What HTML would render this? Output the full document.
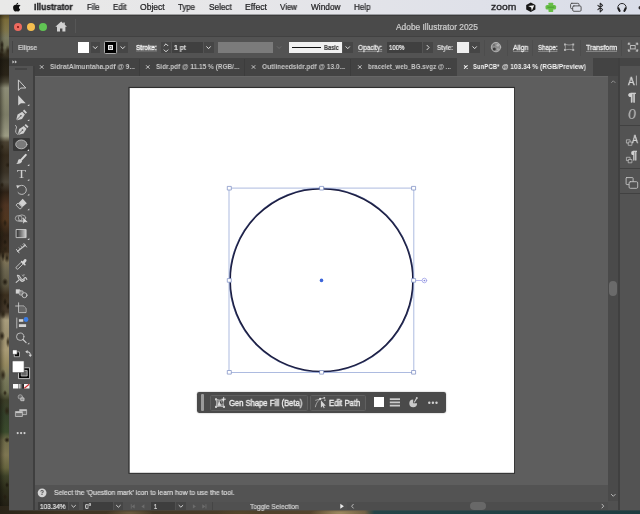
<!DOCTYPE html>
<html lang="en">
<head>
<meta charset="utf-8">
<title>Adobe Illustrator 2025</title>
<style>
*{margin:0;padding:0;box-sizing:border-box}
html,body{width:640px;height:514px;overflow:hidden;background:#3a3226}
body{position:relative;font-family:"Liberation Sans",sans-serif;font-size:8px;line-height:10px;color:#d8d8d8}
.a{position:absolute}
.t{position:absolute;white-space:pre;line-height:10px;transform-origin:0 0;will-change:transform;-webkit-text-stroke:0.22px currentColor}
.b{-webkit-text-stroke:0}
.sb{-webkit-text-stroke:0.38px currentColor}
.t.s3{-webkit-text-stroke:0.3px currentColor}
.u{background:linear-gradient(#a6a6a6,#a6a6a6) 0 7.8px/100% 0.6px no-repeat}
svg{position:absolute;left:0;top:0;overflow:visible}
.cb{position:absolute;top:41.9px;height:11.2px;background:#464646}
.in{position:absolute;top:41.9px;height:11.2px;background:#404040}
#wall{left:0;top:0;width:640px;height:514px;background:
 radial-gradient(ellipse 2px 3px at 2px 185px,#241c10 0,#241c1000 100%),
 radial-gradient(ellipse 3px 3px at 7px 440px,#1c160c 0,#1c160c00 100%),
 radial-gradient(ellipse 2px 3px at 7px 485px,#1c160c 0,#1c160c00 100%),
 radial-gradient(ellipse 2px 3px at 5px 242px,#1c160c 0,#1c160c00 100%),
 radial-gradient(ellipse 2px 4px at 5px 302px,#1c160c 0,#1c160c00 100%),
 radial-gradient(ellipse 2px 6px at 8px 342px,#2a2214 0,#2a221400 100%),
 radial-gradient(ellipse 2px 5px at 2px 45px,#1c160c 0,#1c160c00 100%),
 radial-gradient(ellipse 2px 5px at 2px 234px,#2a2214 0,#2a221400 100%),
 radial-gradient(ellipse 2px 4px at 8px 306px,#1c160c 0,#1c160c00 100%),
 radial-gradient(ellipse 2px 3px at 1px 210px,#2a2214 0,#2a221400 100%),
 radial-gradient(ellipse 3px 5px at 2px 336px,#241c10 0,#241c1000 100%),
 radial-gradient(ellipse 3px 5px at 7px 258px,#241c10 0,#241c1000 100%),
 radial-gradient(ellipse 2px 3px at 2px 147px,#2a2214 0,#2a221400 100%),
 radial-gradient(ellipse 3px 5px at 3px 314px,#2a2214 0,#2a221400 100%),
 radial-gradient(ellipse 2px 3px at 5px 393px,#241c10 0,#241c1000 100%),
 radial-gradient(ellipse 3px 4px at 5px 282px,#1c160c 0,#1c160c00 100%),
 radial-gradient(ellipse 2px 3px at 5px 497px,#241c10 0,#241c1000 100%),
 radial-gradient(ellipse 3px 5px at 7px 411px,#2a2214 0,#2a221400 100%),
 radial-gradient(ellipse 3px 6px at 3px 375px,#2a2214 0,#2a221400 100%),
 radial-gradient(ellipse 3px 3px at 1px 55px,#241c10 0,#241c1000 100%),
 radial-gradient(ellipse 3px 6px at 8px 51px,#2a2214 0,#2a221400 100%),
 radial-gradient(ellipse 3px 3px at 8px 165px,#241c10 0,#241c1000 100%),
 radial-gradient(ellipse 2px 6px at 3px 256px,#1c160c 0,#1c160c00 100%),
 radial-gradient(ellipse 2px 4px at 2px 50px,#241c10 0,#241c1000 100%),
 radial-gradient(ellipse 2px 4px at 5px 223px,#241c10 0,#241c1000 100%),
 radial-gradient(ellipse 3px 4px at 5px 249px,#2a2214 0,#2a221400 100%),
 linear-gradient(90deg,rgba(10,8,4,.42) 0,rgba(10,8,4,.12) 3px,rgba(0,0,0,0) 5px,rgba(0,0,0,0) 10px,transparent 10px) 0 0/10px 506px no-repeat,
 linear-gradient(180deg,#4a3e20 14px,#7a6c3a 20px,#7e7448 30px,#7a7a60 38px,#6c6c54 48px,#3a3424 54px,#221e14 60px,#2a2418 75px,#4a4636 82px,#8c8c76 88px,#86866e 100px,#7c7c66 115px,#8e8e78 128px,#9c9c84 136px,#4a4232 142px,#342a1c 155px,#3a3226 172px,#4c463a 182px,#2e2216 192px,#4e3422 205px,#50361f 220px,#2e2216 235px,#3a2c1c 252px,#85785a 258px,#6c6650 270px,#5a5440 285px,#3a2e1e 295px,#44382a 312px,#a89c7c 320px,#9c9070 334px,#a89a74 350px,#94885e 365px,#7a7a5c 378px,#6c6e50 392px,#3a3c26 400px,#34402a 414px,#3a4a2c 432px,#6e6a48 440px,#7e7652 455px,#66643e 468px,#3e4228 476px,#2c2c1a 490px,#221f14 506px,transparent 506px) 0 0/10px 514px no-repeat,
 radial-gradient(ellipse 30px 5px at 340px 513px,#a08c62 0,#a08c6200 100%),
 radial-gradient(ellipse 24px 4px at 130px 513px,#6c5c40 0,#6c5c4000 100%),
 radial-gradient(ellipse 24px 4px at 240px 513px,#54462c 0,#54462c00 100%),
 linear-gradient(90deg,#2a2418 0,#3f3524 10%,#463a28 30%,#55452e 50%,#6a5a40 57%,#254548 58.5%,#1e3c40 100%)}
</style>
</head>
<body>
<div id="wall" class="a"></div>

<!-- ===== macOS menu bar ===== -->


<!-- ===== window chrome ===== -->
<div class="a" style="left:9.4px;top:14px;width:630.6px;height:496.4px;background:#535353"></div>
<!-- title bar -->
<div class="a" style="left:9.4px;top:14px;width:630.6px;height:23px;background:#4a4a4a;border-top:2px solid #3b3b3b;border-bottom:1px solid #414141"></div>
<div class="a" style="left:0;top:0;width:640px;height:14px;background:linear-gradient(90deg,#e9e9e8 0,#e6e6e9 40%,#dfe1e9 75%,#d9dde8 100%)"></div>
<div class="a" style="left:0;top:14px;width:640px;height:1px;background:linear-gradient(90deg,#a09f9c 0,#9c9da1 50%,#94989f 100%)"></div>
<div class="a" style="left:14px;top:22.8px;width:8.2px;height:8.2px;border-radius:50%;background:#ed6a5f"></div>
<div class="a" style="left:16.8px;top:25.6px;width:2.6px;height:2.6px;border-radius:50%;background:#7a120c"></div>
<div class="a" style="left:26.5px;top:22.8px;width:8.2px;height:8.2px;border-radius:50%;background:#f5be4f"></div>
<div class="a" style="left:38.8px;top:22.8px;width:8.2px;height:8.2px;border-radius:50%;background:#61c554"></div>
<div class="a" style="left:74.6px;top:19px;width:1px;height:14px;background:#565656"></div>

<!-- control bar -->
<div class="a" style="left:9.4px;top:37px;width:630.6px;height:20.5px;background:#535353"></div>
<div class="a" style="left:12.2px;top:41px;width:1px;height:11.5px;background:#454545"></div>
<div class="a" style="left:77.5px;top:41.9px;width:11.9px;height:11.2px;background:#fff"></div>
<div class="cb" style="left:90.6px;width:9.2px"></div>
<div class="a" style="left:104.4px;top:41.3px;width:12.5px;height:12.4px;background:#000;border:1px solid #ababab;border-radius:1.4px"></div>
<div class="a" style="left:108.2px;top:45.1px;width:4.8px;height:4.8px;background:#777;border:1px solid #ececec"></div>
<div class="a" style="left:109.9px;top:46.8px;width:1.4px;height:1.4px;background:#e0e0e0"></div>
<div class="cb" style="left:118px;width:9.5px"></div>
<div class="a" style="left:135.6px;top:45.2px;width:21.6px;height:6.4px;background:#686868"></div>
<div class="cb" style="left:161.2px;width:9.4px"></div>
<div class="in" style="left:172px;width:30.5px"></div>
<div class="cb" style="left:203.7px;width:10px"></div>
<div class="a" style="left:217.5px;top:41.9px;width:55.5px;height:11.6px;background:#7b7b7b"></div>
<div class="a" style="left:288.7px;top:42px;width:53.2px;height:11px;background:#f0f0f0"></div>
<div class="a" style="left:292px;top:46.9px;width:29px;height:1.2px;background:#111"></div>
<div class="cb" style="left:343px;width:9.8px"></div>
<div class="in" style="left:387px;width:34.9px"></div>
<div class="cb" style="left:422.6px;width:10.9px"></div>
<div class="a" style="left:457px;top:41.9px;width:12px;height:11.2px;background:#efefef"></div>
<div class="cb" style="left:470px;width:9.6px"></div>
<div class="a" style="left:483.6px;top:39.5px;width:1px;height:16px;background:#4d4d4d"></div>
<div class="a" style="left:506.6px;top:39.5px;width:1px;height:16px;background:#4d4d4d"></div>
<div class="a" style="left:532.4px;top:39.5px;width:1px;height:16px;background:#4d4d4d"></div>
<div class="a" style="left:580.4px;top:39.5px;width:1px;height:16px;background:#4d4d4d"></div>
<div class="a" style="left:621.2px;top:39.5px;width:1px;height:16px;background:#4c4c4c"></div>

<!-- tab bar -->
<div class="a" style="left:9.4px;top:57.5px;width:630.6px;height:18.5px;background:#434343"></div>
<div class="a" style="left:139.3px;top:58.5px;width:1px;height:17.5px;background:#3c3c3c"></div>
<div class="a" style="left:243.5px;top:58.5px;width:1px;height:17.5px;background:#3c3c3c"></div>
<div class="a" style="left:349.8px;top:58.5px;width:1px;height:17.5px;background:#3c3c3c"></div>
<div class="a" style="left:456.6px;top:58.4px;width:136.6px;height:17.6px;background:#535353"></div>

<!-- left tool panel -->
<div class="a" style="left:9.4px;top:57.5px;width:25.3px;height:8.1px;background:#434343"></div>
<div class="a" style="left:9.4px;top:65.6px;width:23.9px;height:444.8px;background:#535353"></div>
<div class="a" style="left:33.3px;top:65.6px;width:1.4px;height:444.8px;background:#3f3f3f"></div>
<div class="a" style="left:15px;top:68.3px;width:12.2px;height:1.6px;background:#454545"></div>
<div class="a" style="left:13px;top:138.2px;width:16.9px;height:12.5px;background:#383838;border-radius:1px"></div>

<!-- canvas -->
<div class="a" style="left:34.7px;top:76px;width:573.5px;height:408.5px;background:#5e5e5e;border-top:1px solid #666"></div>
<!-- artboard -->
<svg width="640" height="514" viewBox="0 0 640 514"><rect x="128.4" y="86.9" width="386.6" height="386.9" fill="#2e2e2e"/><rect x="129.65" y="88.05" width="384.4" height="384.75" fill="#fff"/></svg>

<!-- vertical scrollbar -->
<div class="a" style="left:608.2px;top:76px;width:10.2px;height:425.5px;background:#4a4a4a"></div>
<div class="a" style="left:609.1px;top:280.8px;width:8.3px;height:15px;border-radius:4.2px;background:#6a6a6a"></div>
<div class="a" style="left:608.2px;top:501px;width:10.2px;height:9.4px;background:#505050"></div>
<div class="a" style="left:617.8px;top:57.5px;width:2.4px;height:452.9px;background:#404040"></div>
<!-- right dock -->
<div class="a" style="left:620.2px;top:58.2px;width:19.8px;height:7.4px;background:#454545"></div>
<div class="a" style="left:620.2px;top:65.6px;width:19.8px;height:444.8px;background:#535353"></div>
<div class="a" style="left:620.2px;top:124.7px;width:19.8px;height:1px;background:#414141"></div>
<div class="a" style="left:620.2px;top:168.1px;width:19.8px;height:1px;background:#414141"></div>
<div class="a" style="left:620.2px;top:192.8px;width:19.8px;height:1px;background:#414141"></div>

<!-- hint bar + status bar -->
<div class="a" style="left:34.7px;top:484.5px;width:573.5px;height:17px;background:#535353"></div>
<div class="a" style="left:34.7px;top:501.5px;width:573.5px;height:8.9px;background:#505050"></div>
<div class="a" style="left:347px;top:501.5px;width:261.2px;height:8.9px;background:#4d4d4d"></div>
<div class="a" style="left:470px;top:502px;width:16px;height:8px;border-radius:4px;background:#686868"></div>
<div class="a" style="left:38px;top:502px;width:30px;height:8.4px;background:#3e3e3e"></div>
<div class="a" style="left:68.7px;top:502px;width:10px;height:8.4px;background:#464646"></div>
<div class="a" style="left:82.5px;top:502px;width:30px;height:8.4px;background:#3e3e3e"></div>
<div class="a" style="left:113.7px;top:502px;width:9.5px;height:8.4px;background:#464646"></div>
<div class="a" style="left:150.5px;top:502px;width:24.5px;height:8.4px;background:#3e3e3e"></div>
<div class="a" style="left:176px;top:502px;width:9.7px;height:8.4px;background:#464646"></div>
<div class="a" style="left:211.7px;top:502px;width:1px;height:8.4px;background:#454545"></div>

<!-- floating contextual task bar -->
<div class="a" style="left:197.2px;top:391.5px;width:248.5px;height:21.8px;background:#4a4a4a;border-radius:2.4px;box-shadow:0 0 1.5px rgba(0,0,0,.45)"></div>
<div class="a" style="left:201.2px;top:394px;width:2.5px;height:16.6px;background:#999;border-radius:1px"></div>
<div class="a" style="left:210px;top:394.6px;width:97.5px;height:16.3px;background:#4f4f4f;border:1px solid #606060;border-radius:1.5px"></div>
<div class="a" style="left:309.7px;top:394.6px;width:56.8px;height:16.3px;background:#4f4f4f;border:1px solid #606060;border-radius:1.5px"></div>
<div class="a" style="left:373.7px;top:397.4px;width:10px;height:10px;background:#fff"></div>

<!-- soft bottom edge of the window (sub-pixel) -->
<div class="a" style="left:9px;top:510px;width:631px;height:1px;background:rgba(80,80,80,.42)"></div>

<!-- ===== icons (single overlay, page coordinates) ===== -->
<svg width="640" height="514" viewBox="0 0 640 514" fill="none" stroke-linecap="round" stroke-linejoin="round">
<!-- menu bar: apple, cube, printer, windows, bluetooth, headphones -->
<g transform="translate(13.1 2.7) scale(0.0452 0.0448)"><path fill="#111" d="M150 72c-1 1-21 12-21 37 0 29 26 39 26 40 0 1-4 14-13 27-8 12-17 23-30 23s-16-8-31-8c-15 0-20 8-32 8s-20-11-30-24C8 158 0 131 0 106c0-41 27-62 53-62 14 0 25 9 34 9 8 0 21-10 37-10 6 0 28 1 42 21zM101 34c7-8 11-19 11-30 0-2 0-3-1-4-11 0-24 7-31 16-6 7-12 18-12 29 0 2 0 3 1 4 1 0 2 0 3 0 10 0 22-6 29-15z"/></g>
<path fill="#161616" d="M530.8 2.5 L535.4 4.9 V9.5 L530.8 11.9 L526.2 9.5 V4.9z"/>
<path fill="#f4f4f4" d="M528.1 5.9 L534.3 5.3 L531.8 10.7 L531.2 7.6z"/>
<g fill="#66bd46"><rect x="548.5" y="2.7" width="4.7" height="3.2" rx=".6"/><rect x="545.5" y="5" width="10.6" height="4.6" rx="1.6"/><rect x="548.5" y="8.8" width="4.7" height="3.1" rx=".6"/></g>
<rect x="547.4" y="6.6" width="6.8" height="1.3" fill="#4fa636"/>
<rect x="570.6" y="3.3" width="8.4" height="5.4" rx="1.2" stroke="#48484a" stroke-width=".9"/>
<rect x="572.7" y="5.9" width="8.4" height="5.4" rx="1.2" fill="#dcdfe8" stroke="#48484a" stroke-width=".9"/>
<path d="M597.9 5.4 L602.6 9.6 L600.2 11.9 V3.2 L602.6 5.4 L597.9 9.6" stroke="#2a2a2c" stroke-width="1.05"/>
<path d="M619.3 11 A4.25 4.25 0 1 1 624.7 11" stroke="#2a2a2c" stroke-width="1"/>
<path d="M618.5 8.3 L619.7 11 M625.5 8.3 L624.3 11" stroke="#1e1e20" stroke-width="1.9"/>
<circle cx="640.2" cy="7.7" r="1.7" fill="#2a2a2c"/>

<!-- title bar: home -->
<path fill="#d2d2d2" d="M61.2 21.5 L55.4 26.7 H57 V31.5 H60 V28.4 H62.4 V31.5 H65.4 V26.7 H67 L64.8 24.7 V22.4 H63.3 V23.4z"/>

<!-- control bar chevrons -->
<g stroke="#dcdcdc" stroke-width="1">
<path d="M93.4 46.7 l1.85 2 l1.85 -2"/><path d="M120.9 46.7 l1.85 2 l1.85 -2"/><path d="M206.7 46.7 l1.85 2 l1.85 -2"/>
<path d="M345.9 46.7 l1.85 2 l1.85 -2"/><path d="M472.8 46.7 l1.85 2 l1.85 -2"/>
<path d="M164.1 45.7 l1.9 -1.9 l1.9 1.9"/><path d="M164.1 49.9 l1.9 1.9 l1.9 -1.9"/>
<path d="M427 45.3 l2.1 2.2 l-2.1 2.2"/>
</g>
<path d="M277.2 46.6 l1.9 1.9 l1.9 -1.9" stroke="#6c6c6c" stroke-width="1"/>
<!-- globe (recolor artwork) -->
<circle cx="496" cy="47.1" r="4.7" fill="#8c8c8c" stroke="#b9b9b9" stroke-width=".9"/>
<circle cx="494.3" cy="48.9" r="1.5" fill="#3c3c3c"/><circle cx="497.8" cy="45.2" r="1.3" fill="#b4b4b4"/><circle cx="497.9" cy="49.3" r="1.1" fill="#a8a8a8"/><circle cx="494" cy="45" r="1" fill="#6a6a6a"/>
<!-- shape widget icon -->
<path d="M565 44.5 Q569.1 45.6 573.2 44.5 Q572.3 47.2 573.2 49.9 Q569.1 48.8 565 49.9 Q565.9 47.2 565 44.5z" stroke="#a8a8a8" stroke-width=".8"/>
<g fill="#b6b6b6"><rect x="564" y="43.5" width="1.9" height="1.9"/><rect x="572.3" y="43.5" width="1.9" height="1.9"/><rect x="564" y="49" width="1.9" height="1.9"/><rect x="572.3" y="49" width="1.9" height="1.9"/></g>
<!-- isolate/transform-each icon -->
<rect x="630.8" y="45.5" width="4.4" height="3.4" stroke="#c9c9c9" stroke-width=".9"/>
<g stroke="#c9c9c9" stroke-width=".9"><path d="M628.5 43.3 l1.7 1.5 M637.5 43.3 l-1.7 1.5 M628.5 51 l1.7 -1.5 M637.5 51 l-1.7 -1.5"/><path d="M628.3 44.7 v-1.5 h1.6 M637.7 44.7 v-1.5 h-1.6 M628.3 49.6 v1.5 h1.6 M637.7 49.6 v1.5 h-1.6"/></g>

<!-- tab close x -->
<g stroke="#c6c6c6" stroke-width="1"><path d="M40.25 65.55 l2.90 2.90 m0 -2.90 l-2.90 2.90"/><path d="M146.35 65.55 l2.90 2.90 m0 -2.90 l-2.90 2.90"/><path d="M252.05 65.55 l2.90 2.90 m0 -2.90 l-2.90 2.90"/><path d="M358.35 65.55 l2.90 2.90 m0 -2.90 l-2.90 2.90"/></g>
<g stroke="#f2f2f2" stroke-width="1.05"><path d="M464.35 65.55 l2.90 2.90 m0 -2.90 l-2.90 2.90"/></g>
<!-- panel collapse >> -->
<path d="M12.4 60.3 l2.1 1.6 l-2.1 1.6z M14.9 60.3 l2.1 1.6 l-2.1 1.6z" fill="#c4c4c4"/>

<!-- ===== left tools ===== -->
<g id="tools">
<path d="M18.4 80.3 V90.3 L20.9 88 H25.4z" stroke="#cdcdcd" stroke-width="1"/>
<path d="M18.2 95.3 V105.6 L20.9 103.2 H25.7z" fill="#d2d2d2"/>
<!-- pen -->
<path fill="#d0d0d0" d="M16.3 119.5 L17.6 114.6 L22.2 111.7 L24.9 114.4 L22 119 L17.1 120.3z"/>
<path fill="#d0d0d0" d="M22.9 110.9 L24.2 109.6 L27 112.4 L25.7 113.7z"/>
<path d="M16.7 119.9 L20.6 116" stroke="#535353" stroke-width=".8"/><circle cx="20.9" cy="115.7" r=".8" fill="#535353"/>
<!-- curvature pen -->
<path fill="#d0d0d0" d="M17.9 133.9 L19.2 129 L23.8 126.1 L26.5 128.8 L23.6 133.4 L18.7 134.7z"/>
<path fill="#d0d0d0" d="M24.5 125.3 L25.8 124 L28.6 126.8 L27.3 128.1z"/>
<path d="M18.3 134.3 L22.2 130.4" stroke="#535353" stroke-width=".8"/><circle cx="22.5" cy="130.1" r=".8" fill="#535353"/>
<path d="M15.6 125.3 Q17.6 126.8 15.9 129.6 Q14.4 132.6 17.6 134.4" stroke="#c4c4c4" stroke-width=".9"/>
<!-- ellipse (active) -->
<ellipse cx="21.3" cy="144.4" rx="5.6" ry="4.4" fill="#7a7a7a" stroke="#bcbcbc" stroke-width=".9"/>
<!-- brush -->
<path d="M25.8 154.9 L21.2 159.9" stroke="#d6d6d6" stroke-width="2.1"/>
<path fill="#d2d2d2" d="M20 158.9 L22.1 161 Q21.6 164 16.2 164 Q17.8 162.8 17.9 161 Q18.2 159 20 158.9z"/>
<!-- rotate -->
<path d="M18.2 186.9 A4.6 4.6 0 1 1 18 192.6" stroke="#bdbdbd" stroke-width="1"/>
<path fill="#d0d0d0" d="M16.3 185.3 L20 185.5 L17.3 188.6z"/>
<!-- eraser -->
<path fill="#d2d2d2" d="M22.7 198.8 L26.8 203.2 L22.5 206.9 L18.6 202.9z"/>
<path d="M18.3 203.3 L22.2 207.3 L19.9 209.1 L16.2 205.3z" fill="#585858" stroke="#cfcfcf" stroke-width=".8"/>
<!-- shape builder -->
<ellipse cx="18.8" cy="218.4" rx="3.5" ry="2.9" stroke="#bdbdbd" stroke-width=".8"/><ellipse cx="22" cy="217.9" rx="3.7" ry="3" stroke="#bdbdbd" stroke-width=".8"/>
<path d="M18.5 220.6 Q20.5 222.4 23 221.6" stroke="#bdbdbd" stroke-width=".8"/>
<path fill="#d6d6d6" d="M22.9 216.9 V224 L24.6 222.3 H27.9z" stroke="#535353" stroke-width=".4"/>
<!-- mesh/measure -->
<path d="M17.6 251.3 L25.2 245.2" stroke="#c9c9c9" stroke-width="1.3"/>
<path d="M16.4 249.4 L19.1 252.9 M23.9 243.5 L26.6 247" stroke="#c9c9c9" stroke-width="1"/>
<path d="M18.9 247.6 l.9 1.1 M21 246 l.9 1.1 M22.9 244.5 l.6 .8" stroke="#c6c6c6" stroke-width=".7"/>
<!-- eyedropper -->
<rect x="-1.3" y="-4.4" width="2.6" height="8.8" rx="1.2" transform="translate(19.6 265.6) rotate(45)" stroke="#cdcdcd" stroke-width=".85"/>
<path d="M21.6 261.5 L24.9 264.8" stroke="#d6d6d6" stroke-width="1.5"/>
<path d="M23.5 262.8 L25.2 260.4" stroke="#d6d6d6" stroke-width="2.7"/>
<!-- puppet warp -->
<path d="M16.2 282.4 L19.4 279.6 Q18.2 277.4 17.4 275.3 Q19.5 274.8 20.3 277.6 Q22.2 281 24.2 278.3 Q25.6 276.4 26.8 279.4" stroke="#cdcdcd" stroke-width="1.1"/>
<path d="M20.4 279.8 Q22 282.4 24.4 280" stroke="#cdcdcd" stroke-width="1.5"/>
<path d="M22.3 275 l.9 1.3 m.8 -1.9 l-.2 1.3" stroke="#bdbdbd" stroke-width=".7"/>
<!-- blend -->
<rect x="15.8" y="289.3" width="4.1" height="4.3" fill="#d4d4d4"/>
<rect x="19.2" y="290.8" width="4" height="4.3" rx="1.2" fill="#7e7e7e" stroke="#c4c4c4" stroke-width=".7"/>
<circle cx="24.5" cy="295.2" r="2.5" fill="#535353" stroke="#cdcdcd" stroke-width=".9"/>
<!-- artboard -->
<path d="M18.6 302.8 V312.6 H26 V308.2 L23.8 306 H15.6" stroke="#c9c9c9" stroke-width=".9"/>
<path d="M23.6 306 V308.4 H26z" fill="#d6d6d6"/>
<rect x="19.2" y="306.6" width="6.3" height="5.5" fill="#666"/>
<!-- graph + blue dot -->
<path d="M16.8 318 V328" stroke="#c4c4c4" stroke-width=".9"/>
<rect x="18.9" y="319.2" width="4.4" height="2.6" fill="#d4d4d4"/><rect x="18.9" y="324.2" width="7.2" height="2.8" fill="#d4d4d4"/>
<circle cx="26" cy="319.5" r="2.4" fill="#3c7ee6"/>
<!-- zoom -->
<circle cx="20.2" cy="336.7" r="3.7" stroke="#c4c4c4" stroke-width=".9"/><path d="M23 339.5 L26.1 342.6" stroke="#cdcdcd" stroke-width="1.2"/>
<!-- flyout corner marks -->
<g fill="#d6d6d6"><path d="M29.3 104.0 v1.9 h-1.9z"/><path d="M29.3 119.19999999999999 v1.9 h-1.9z"/><path d="M29.099999999999998 149.1 v1.9 h-1.9z"/><path d="M29.3 164.0 v1.9 h-1.9z"/><path d="M29.3 178.9 v1.9 h-1.9z"/><path d="M29.3 193.7 v1.9 h-1.9z"/><path d="M29.3 208.4 v1.9 h-1.9z"/><path d="M29.3 238.1 v1.9 h-1.9z"/><path d="M29.3 342.40000000000003 v1.9 h-1.9z"/></g>
<!-- default fill/stroke mini -->
<rect x="14.7" y="351.9" width="4.8" height="4.8" fill="#0a0a0a" stroke="#d8d8d8" stroke-width=".7"/>
<rect x="12.7" y="349.9" width="4.4" height="4.4" fill="#fff" stroke="#3a3a3a" stroke-width=".5"/>
<!-- swap arrows -->
<path d="M27 351.7 Q30.3 351.7 30.3 355" stroke="#cdcdcd" stroke-width="1.1"/>
<path fill="#d0d0d0" d="M25.2 351.7 L27.6 349.9 V353.5z M30.3 357.1 L28.5 354.7 H32.1z"/>
<!-- stroke swatch (behind) then fill swatch -->
<rect x="19" y="367.8" width="10.6" height="10.8" fill="#050505" stroke="#e6e6e6" stroke-width=".8"/>
<rect x="21.6" y="370.4" width="5.6" height="5.6" fill="#666" stroke="#dcdcdc" stroke-width=".7"/>
<rect x="12.4" y="360.8" width="11.8" height="11.9" fill="#fff" stroke="#3c3c3c" stroke-width=".7"/>
<!-- color / gradient / none -->
<rect x="13" y="384" width="5" height="4.5" fill="#fafafa"/>
<rect x="18.6" y="384" width="3.8" height="4.5" fill="url(#gm)"/>
<rect x="22.4" y="384" width="1.6" height="4.5" fill="#2a2a2a"/>
<rect x="24" y="384" width="5.5" height="4.5" fill="#f6f6f6"/>
<path d="M24.3 388.2 L29.2 384.3" stroke="#d02b2b" stroke-width="1.1" stroke-linecap="butt"/>
<!-- draw mode -->
<circle cx="20.3" cy="396.9" r="2.2" fill="#6a6a6a" stroke="#a8a8a8" stroke-width=".8"/>
<rect x="21.2" y="397.9" width="2.8" height="2.8" fill="#909090" stroke="#d2d2d2" stroke-width=".8"/>
<!-- screen mode -->
<rect x="20" y="409.5" width="6.6" height="5.1" fill="#6c6c6c" stroke="#c2c2c2" stroke-width=".8"/>
<path d="M20 410.5 H26.6" stroke="#c2c2c2" stroke-width="1.1" stroke-linecap="butt"/>
<rect x="15.8" y="411.5" width="6.6" height="5" fill="#707070" stroke="#c6c6c6" stroke-width=".8"/>
<path d="M15.8 412.5 H22.4" stroke="#c6c6c6" stroke-width="1.1" stroke-linecap="butt"/>
<!-- more ... -->
<g fill="#d0d0d0"><circle cx="17.7" cy="433.1" r="1.1"/><circle cx="21.1" cy="433.1" r="1.1"/><circle cx="24.5" cy="433.1" r="1.1"/></g>
</g>
<defs><linearGradient id="gm" x1="0" x2="1"><stop offset="0" stop-color="#f4f4f4"/><stop offset="1" stop-color="#3a3a3a"/></linearGradient>
<linearGradient id="gt" x1="0" x2="1"><stop offset="0" stop-color="#303030"/><stop offset="1" stop-color="#d2d2d2"/></linearGradient></defs>
<!-- gradient tool -->
<rect x="16.5" y="229.5" width="9.6" height="8.1" fill="url(#gt)" stroke="#c9c9c9" stroke-width=".9"/>

<!-- ===== right dock icons ===== -->
<path d="M636.4 76 V85" stroke="#c4c4c4" stroke-width=".8"/>
<g stroke="#c9c9c9" stroke-width=".7" fill="#535353"><rect x="626.8" y="139.8" width="3.3" height="3.3"/><rect x="628.6" y="142" width="3.3" height="3.3"/><rect x="626.8" y="157.3" width="3.3" height="3.3"/><rect x="628.6" y="159.5" width="3.3" height="3.3"/></g>
<rect x="626.1" y="177.6" width="7" height="7" rx=".6" stroke="#c4c4c4" stroke-width=".9"/>
<rect x="629.1" y="181.7" width="8.6" height="6.6" rx="1.2" fill="#535353" stroke="#c4c4c4" stroke-width=".9"/>

<!-- scrollbar chevrons -->
<path d="M611.5 82.6 l1.8 -1.8 l1.8 1.8" stroke="#969696" stroke-width=".9"/>
<g stroke="#b8b8b8" stroke-width="1"><path d="M611.4 494.4 l1.9 1.9 l1.9 -1.9"/><path d="M353.3 504.3 l-1.7 1.9 l1.7 1.9"/><path d="M602 504.2 l1.7 1.9 l-1.7 1.9"/></g>

<!-- status bar -->
<circle cx="42.1" cy="492.8" r="4.4" fill="#d4d4d4"/>
<g stroke="#dcdcdc" stroke-width=".9"><path d="M71.7 505.4 l1.9 1.8 l1.9 -1.8"/><path d="M116.5 505.4 l1.9 1.8 l1.9 -1.8"/><path d="M179 505.4 l1.9 1.8 l1.9 -1.8"/></g>
<g fill="#6c6c6c"><path d="M134.7 504.2 v4.4 l-3 -2.2z"/><rect x="130.8" y="504.2" width=".9" height="4.4"/><path d="M144.4 504.2 v4.4 l-3 -2.2z"/>
<path d="M192.9 504.2 v4.4 l3 -2.2z"/><path d="M202.3 504.2 v4.4 l3 -2.2z"/><rect x="205.5" y="504.2" width=".9" height="4.4"/></g>
<path d="M340.3 503.8 v5 l3.6 -2.5z" fill="#ececec"/>

<!-- ===== artwork: ellipse + selection ===== -->
<circle cx="321.55" cy="280.15" r="91.5" stroke="#17183a" stroke-width="1.8"/>
<circle cx="321.55" cy="280.15" r="92.1" stroke="#6f8fe0" stroke-width=".5" opacity=".5"/>
<rect x="229.4" y="188.1" width="184.4" height="184.4" stroke="#8a9dd2" stroke-width=".7"/>
<g fill="#fff" stroke="#7f90c4" stroke-width=".75"><rect x="227.7" y="186.4" width="3.6" height="3.6"/><rect x="320.0" y="186.4" width="3.6" height="3.6"/><rect x="412.0" y="186.4" width="3.6" height="3.6"/><rect x="227.7" y="278.6" width="3.6" height="3.6"/><rect x="412.0" y="278.6" width="3.6" height="3.6"/><rect x="227.7" y="370.5" width="3.6" height="3.6"/><rect x="320.0" y="370.5" width="3.6" height="3.6"/><rect x="412.0" y="370.5" width="3.6" height="3.6"/></g>
<path d="M416 280.5 H422" stroke="#a4a6ea" stroke-width=".8"/><circle cx="424.4" cy="280.5" r="2.3" stroke="#9a9ce6" stroke-width=".75" fill="#fff"/><circle cx="424.4" cy="280.5" r=".85" fill="#8486dc"/>
<circle cx="321.5" cy="280.4" r="1.8" fill="#3d66da"/>

<!-- ===== contextual task bar icons ===== -->
<path d="M216.2 399.4 Q219.8 400.7 223.4 399.6 Q222.7 403 223.8 406.8 Q220 405.5 216.2 406.8 Q217.2 403 216.2 399.4z" fill="#8c8c8c" stroke="#c2c2c2" stroke-width=".8"/>
<g fill="#cecece"><rect x="215" y="398.3" width="2" height="2"/><rect x="215" y="405.9" width="2" height="2"/><rect x="223" y="405.9" width="2" height="2"/></g>
<path d="M217.3 405.7 L219.3 401 L221.2 405.7z" fill="#dcdcdc"/>
<circle cx="221.5" cy="402.3" r="1.5" fill="#3e3e3e"/><circle cx="221.8" cy="401.9" r=".55" fill="#e8e8e8"/>
<path d="M223.7 397.5 v3.4 M222 399.2 h3.4" stroke="#f0f0f0" stroke-width=".9"/>
<path d="M315.4 406.8 Q316.6 401.6 320.2 399.2" stroke="#bcbcbc" stroke-width=".8" stroke-dasharray="1.6 .8"/>
<path d="M315.6 400.3 L320.2 399 L324.4 397.9" stroke="#c2c2c2" stroke-width=".7"/>
<circle cx="320.2" cy="398.9" r="1.1" fill="#dedede"/><rect x="323.6" y="397.1" width="1.5" height="1.5" fill="#cfcfcf"/><rect x="324.2" y="399.5" width="1.4" height="1.4" fill="#bdbdbd"/>
<path fill="#d4d4d4" d="M320.9 400.3 V407.7 L322.7 406.1 L323.8 408.3 L324.7 407.8 L323.7 405.7 H325.8z"/>
<g fill="#cbcbcb"><rect x="389.8" y="398.3" width="10.2" height="1.8"/><rect x="389.8" y="401.5" width="10.2" height="1.8"/><rect x="389.8" y="404.7" width="10.2" height="1.8"/></g>
<path fill="#cbcbcb" d="M413.2 403.3 V399.4 A3.9 3.9 0 1 0 417.1 403.3z"/>
<path d="M414.5 402 L416.6 398.4" stroke="#cbcbcb" stroke-width="1.1"/><circle cx="416.8" cy="398.1" r="1" fill="#cbcbcb"/>
<g fill="#d2d2d2"><circle cx="429.3" cy="402.8" r="1.2"/><circle cx="432.9" cy="402.8" r="1.2"/><circle cx="436.5" cy="402.8" r="1.2"/></g>
</svg>

<!-- ===== text ===== -->
<span class="t s3 b" style="left:33.75px;top:2.12px;font-size:8.6px;color:#1c1c1e;transform:scaleX(0.9775);font-weight:bold;">Illustrator</span>
<span class="t" style="left:86.50px;top:2.22px;font-size:8.3px;color:#1c1c1e;transform:scaleX(0.9346);">File</span>
<span class="t" style="left:112.75px;top:2.22px;font-size:8.3px;color:#1c1c1e;transform:scaleX(0.9443);">Edit</span>
<span class="t" style="left:139.75px;top:2.22px;font-size:8.3px;color:#1c1c1e;transform:scaleX(1.0278);">Object</span>
<span class="t" style="left:177.90px;top:2.22px;font-size:8.3px;color:#1c1c1e;transform:scaleX(0.9500);">Type</span>
<span class="t" style="left:208.75px;top:2.22px;font-size:8.3px;color:#1c1c1e;transform:scaleX(0.9864);">Select</span>
<span class="t" style="left:245.00px;top:2.22px;font-size:8.3px;color:#1c1c1e;transform:scaleX(1.0398);">Effect</span>
<span class="t" style="left:280.00px;top:2.22px;font-size:8.3px;color:#1c1c1e;transform:scaleX(0.9527);">View</span>
<span class="t" style="left:310.60px;top:2.22px;font-size:8.3px;color:#1c1c1e;transform:scaleX(0.9961);">Window</span>
<span class="t" style="left:353.50px;top:2.22px;font-size:8.3px;color:#1c1c1e;transform:scaleX(0.9661);">Help</span>
<span class="t s3" style="left:491.00px;top:1.70px;font-size:9.8px;color:#232326;transform:scaleX(1.0555);">zoom</span>
<span class="t" style="left:395.60px;top:21.82px;font-size:8.3px;color:#cdcdcd;transform:scaleX(1.0088);">Adobe Illustrator 2025</span>
<span class="t" style="left:18.00px;top:43.37px;font-size:7.6px;color:#d8d8d8;transform:scaleX(0.8492);">Ellipse</span>
<span class="t s3" style="left:135.90px;top:43.37px;font-size:7.6px;color:#f4f4f4;transform:scaleX(0.8561);">Stroke:</span>
<span class="t" style="left:173.75px;top:43.37px;font-size:7.6px;color:#f2f2f2;transform:scaleX(0.9351);">1 pt</span>
<span class="t" style="left:324.00px;top:43.37px;font-size:7.6px;color:#1a1a1a;transform:scaleX(0.7939);">Basic</span>
<span class="t u s3" style="left:358.00px;top:43.37px;font-size:7.6px;color:#e6e6e6;transform:scaleX(0.8615);">Opacity:</span>
<span class="t" style="left:389.00px;top:43.37px;font-size:7.6px;color:#f2f2f2;transform:scaleX(0.7923);">100%</span>
<span class="t" style="left:437.00px;top:43.37px;font-size:7.6px;color:#e6e6e6;transform:scaleX(0.8421);">Style:</span>
<span class="t u s3" style="left:512.75px;top:43.37px;font-size:7.6px;color:#ebebeb;transform:scaleX(0.9029);">Align</span>
<span class="t u s3" style="left:537.50px;top:43.37px;font-size:7.6px;color:#ebebeb;transform:scaleX(0.8099);">Shape:</span>
<span class="t u s3" style="left:586.00px;top:43.37px;font-size:7.6px;color:#ebebeb;transform:scaleX(0.9103);">Transform</span>
<span class="t b" style="left:50.00px;top:61.57px;font-size:7.6px;color:#c6c6c6;transform:scaleX(0.8776);font-weight:bold;">SidratAlmuntaha.pdf @ 9...</span>
<span class="t b" style="left:155.75px;top:61.57px;font-size:7.6px;color:#c6c6c6;transform:scaleX(0.8582);font-weight:bold;">Sidr.pdf @ 11.15 % (RGB/...</span>
<span class="t b" style="left:261.75px;top:61.57px;font-size:7.6px;color:#c6c6c6;transform:scaleX(0.8746);font-weight:bold;">Outlineedsidr.pdf @ 13.0...</span>
<span class="t b" style="left:367.50px;top:61.57px;font-size:7.6px;color:#c6c6c6;transform:scaleX(0.8243);font-weight:bold;">bracelet_web_BG.svgz @ ...</span>
<span class="t b" style="left:473.25px;top:61.57px;font-size:7.6px;color:#f2f2f2;transform:scaleX(0.7873);font-weight:bold;">SunPCB*</span>
<span class="t b" style="left:501.75px;top:61.57px;font-size:7.6px;color:#f2f2f2;transform:scaleX(0.8692);font-weight:bold;">@ 103.34 % (RGB/Preview)</span>
<span class="t sb" style="left:229.00px;top:399.06px;font-size:8.2px;color:#ececec;transform:scaleX(0.9303);">Gen Shape Fill (Beta)</span>
<span class="t sb" style="left:329.40px;top:399.06px;font-size:8.2px;color:#ececec;transform:scaleX(0.9388);">Edit Path</span>
<span class="t" style="left:53.75px;top:487.64px;font-size:7.4px;color:#d8d8d8;transform:scaleX(0.9291);">Select the 'Question mark' icon to learn how to use the tool.</span>
<span class="t" style="left:40.00px;top:502.17px;font-size:7.6px;color:#e6e6e6;transform:scaleX(0.8504);">103.34%</span>
<span class="t" style="left:85.00px;top:502.17px;font-size:7.6px;color:#e6e6e6;transform:scaleX(0.8602);">0°</span>
<span class="t" style="left:153.75px;top:502.17px;font-size:7.6px;color:#e6e6e6;transform:scaleX(0.7203);">1</span>
<span class="t" style="left:250.00px;top:501.54px;font-size:7.4px;color:#d0d0d0;transform:scaleX(0.8989);">Toggle Selection</span>
<span class="t b" style="left:40.10px;top:487.97px;font-size:7.6px;color:#3a3a3a;transform:scaleX(0.8620);font-weight:bold;">?</span>
<span class="t b" style="left:17.00px;top:169.30px;font-size:13px;color:#d0d0d0;transform:scaleX(1.1442);font-family:'Liberation Serif',serif;">T</span>
<span class="t sb" style="left:627.90px;top:75.72px;font-size:11.5px;color:#d2d2d2;transform:scaleX(0.8473);">A</span>
<span class="t s3 b" style="left:627.50px;top:92.16px;font-size:10.5px;color:#d2d2d2;transform:scaleX(1.3861);font-weight:bold;">¶</span>
<span class="t b" style="left:628.00px;top:109.95px;font-size:14px;color:#b2b2b2;transform:scaleX(0.8099);font-weight:bold;font-family:'Liberation Serif',serif;font-style:italic;">O</span>
<span class="t sb" style="left:631.70px;top:133.86px;font-size:10.8px;color:#d2d2d2;transform:scaleX(0.8052);">A</span>
<span class="t s3 b" style="left:630.80px;top:150.94px;font-size:10px;color:#d2d2d2;transform:scaleX(1.1146);font-weight:bold;">¶</span>
</body>
</html>
